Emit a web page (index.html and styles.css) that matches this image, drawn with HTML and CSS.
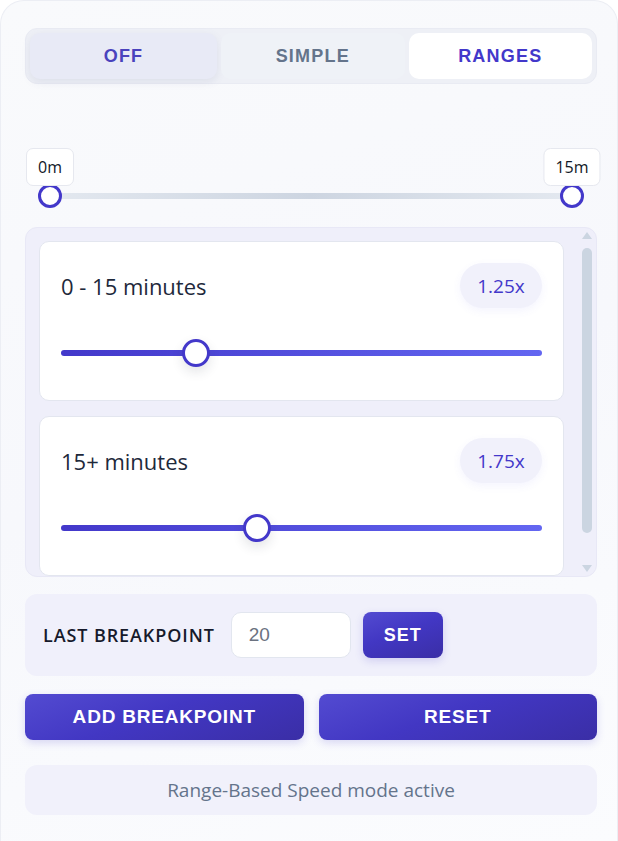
FILE: index.html
```html
<!DOCTYPE html>
<html lang="en">
<head>
<meta charset="utf-8">
<title>Range-Based Speed</title>
<link rel="stylesheet" href="styles.css">
</head>
<body>
<div class="panel">
  <div class="tabs">
    <button class="tab tab-off">OFF</button>
    <button class="tab tab-simple">SIMPLE</button>
    <button class="tab tab-ranges">RANGES</button>
  </div>

  <div class="dual">
    <div class="dual-track"></div>
    <div class="dual-thumb thumb-start"><span class="tip">0m</span></div>
    <div class="dual-thumb thumb-end"><span class="tip">15m</span></div>
  </div>

  <div class="ranges">
    <div class="range-list">
      <div class="card">
        <div class="card-head">
          <span class="card-title">0 - 15 minutes</span>
          <span class="badge">1.25x</span>
        </div>
        <div class="slider">
          <div class="slider-track"></div>
          <div class="slider-thumb" style="left: 121px"></div>
        </div>
      </div>
      <div class="card">
        <div class="card-head">
          <span class="card-title">15+ minutes</span>
          <span class="badge">1.75x</span>
        </div>
        <div class="slider">
          <div class="slider-track"></div>
          <div class="slider-thumb" style="left: 182px"></div>
        </div>
      </div>
    </div>
    <div class="scrollbar">
      <span class="sb-up"></span>
      <span class="sb-thumb"></span>
      <span class="sb-down"></span>
    </div>
  </div>

  <div class="breakpoint">
    <span class="bp-label">LAST BREAKPOINT</span>
    <input class="bp-input" type="text" value="20">
    <button class="btn btn-set">SET</button>
  </div>

  <div class="actions">
    <button class="btn btn-wide">ADD BREAKPOINT</button>
    <button class="btn btn-wide">RESET</button>
  </div>

  <div class="status">Range-Based Speed mode active</div>
</div>
</body>
</html>
```

FILE: styles.css
```css
* { box-sizing: border-box; }

html, body {
  margin: 0;
  padding: 0;
  background: #ffffff;
}

body {
  font-family: "Open Sans", "Noto Sans", sans-serif;
  color: #1e293b;
}

.panel {
  width: 618px;
  min-height: 841px;
  border: 1px solid #eceef4;
  border-bottom: none;
  border-radius: 24px 24px 0 0;
  background: linear-gradient(160deg, #f9fafc 0%, #f7f8fc 50%, #fbfcfe 100%);
  padding: 27px 20px 0 24px;
}

/* Tabs */
.tabs {
  display: grid;
  grid-template-columns: 187px 1fr 1fr;
  gap: 4px;
  padding: 4px;
  height: 56px;
  background: #eef0f6;
  border: 1px solid #e9ebf3;
  border-radius: 12px;
}

.tab {
  border: none;
  border-radius: 10px;
  font-family: "Liberation Sans", Arial, sans-serif;
  font-weight: 700;
  font-size: 18px;
  letter-spacing: 1.2px;
  cursor: pointer;
}

.tab-off {
  background: #e8eaf6;
  color: #4a42bd;
  box-shadow: 0 3px 8px rgba(100, 110, 160, 0.12);
}

.tab-simple {
  background: #eff2f7;
  color: #64748b;
}

.tab-ranges {
  background: #ffffff;
  color: #4338ca;
}

/* Dual range */
.dual {
  position: relative;
  height: 24px;
  margin: 100px 13px 0 13px;
}

.dual-track {
  position: absolute;
  left: 0;
  right: 3px;
  top: 9px;
  height: 6px;
  border-radius: 3px;
  background: linear-gradient(90deg, #e4e9f0 0%, #cdd5e1 50%, #e4e9f0 100%);
}

.dual-thumb {
  position: absolute;
  top: 0;
  width: 24px;
  height: 24px;
  border-radius: 50%;
  background: #ffffff;
  border: 3px solid #4338ca;
}

.thumb-start { left: 0; }
.thumb-end { right: 0; }

.tip {
  position: absolute;
  bottom: calc(100% + 1px);
  left: 50%;
  transform: translateX(-50%);
  height: 38px;
  padding: 0 11px;
  display: flex;
  align-items: center;
  background: #ffffff;
  border: 1px solid #e6e8ef;
  border-radius: 7px;
  font-size: 16px;
  color: #111827;
  white-space: nowrap;
}

/* Ranges scroll area */
.ranges {
  position: relative;
  height: 350px;
  margin-top: 19px;
  background: #efeffa;
  border: 1px solid #e8e8f6;
  border-radius: 12px;
  overflow: hidden;
}

.range-list {
  display: flex;
  flex-direction: column;
  gap: 15px;
  padding: 13px 32px 0 13px;
}

.card {
  flex: none;
  height: 160px;
  background: #ffffff;
  border: 1px solid #e3e6ef;
  border-radius: 10px;
  padding: 21px 21px 0 21px;
}

.card-head {
  display: flex;
  align-items: center;
  justify-content: space-between;
  height: 45px;
}

.card-title {
  font-size: 22px;
  color: #1e293b;
}

.badge {
  display: flex;
  align-items: center;
  justify-content: center;
  width: 82px;
  height: 45px;
  border-radius: 23px;
  background: #f1f1fb;
  color: #4338ca;
  font-size: 19px;
  font-weight: 500;
  box-shadow: 0 3px 8px rgba(99, 102, 241, 0.07);
}

.slider {
  position: relative;
  height: 28px;
  margin-top: 31px;
}

.slider-track {
  position: absolute;
  left: 0;
  right: 0;
  top: 11px;
  height: 6px;
  border-radius: 3px;
  background: linear-gradient(90deg, #4338ca 0%, #6366f1 100%);
}

.slider-thumb {
  position: absolute;
  top: 0;
  width: 28px;
  height: 28px;
  border-radius: 50%;
  background: #ffffff;
  border: 3px solid #4338ca;
  box-shadow: 0 5px 12px rgba(30, 41, 59, 0.12);
}

/* fake scrollbar */
.scrollbar {
  position: absolute;
  top: 0;
  right: 3px;
  bottom: 0;
  width: 12px;
}

.sb-up, .sb-down {
  position: absolute;
  left: 1px;
  width: 0;
  height: 0;
  border-left: 5px solid transparent;
  border-right: 5px solid transparent;
}

.sb-up {
  top: 4px;
  border-bottom: 7px solid #cbd5e1;
}

.sb-down {
  bottom: 4px;
  border-top: 7px solid #cbd5e1;
}

.sb-thumb {
  position: absolute;
  top: 20px;
  left: 1px;
  width: 10px;
  height: 285px;
  border-radius: 5px;
  background: #cbd5e1;
}

/* Breakpoint panel */
.breakpoint {
  display: flex;
  align-items: center;
  height: 82px;
  margin-top: 17px;
  padding: 0 18px;
  background: #f0f0fb;
  border-radius: 12px;
}

.bp-label {
  font-size: 18px;
  font-weight: 600;
  letter-spacing: 0.9px;
  color: #161a2b;
  margin-right: 16px;
}

.bp-input {
  width: 120px;
  height: 46px;
  border: 1px solid #e2e6ef;
  border-radius: 10px;
  background: #ffffff;
  padding: 0 17px;
  font-family: "Liberation Sans", Arial, sans-serif;
  font-size: 19px;
  color: #6b7280;
  outline: none;
  margin-right: 12px;
}

.btn {
  border: none;
  border-radius: 8px;
  color: #ffffff;
  font-family: "Liberation Sans", Arial, sans-serif;
  font-weight: 700;
  font-size: 19px;
  letter-spacing: 0.8px;
  background: linear-gradient(160deg, #534bd1 0%, #4237c3 45%, #3a2ea6 100%);
  box-shadow: 0 3px 8px rgba(67, 56, 202, 0.18);
  cursor: pointer;
}

.btn-set {
  width: 80px;
  height: 46px;
  font-size: 18px;
  letter-spacing: 1px;
}

.actions {
  display: grid;
  grid-template-columns: 1fr 1fr;
  gap: 15px;
  margin-top: 18px;
}

.btn-wide {
  height: 46px;
}

.status {
  display: flex;
  align-items: center;
  justify-content: center;
  height: 50px;
  margin-top: 25px;
  background: #f1f1fb;
  border-radius: 12px;
  font-size: 19px;
  color: #64748b;
}
```
